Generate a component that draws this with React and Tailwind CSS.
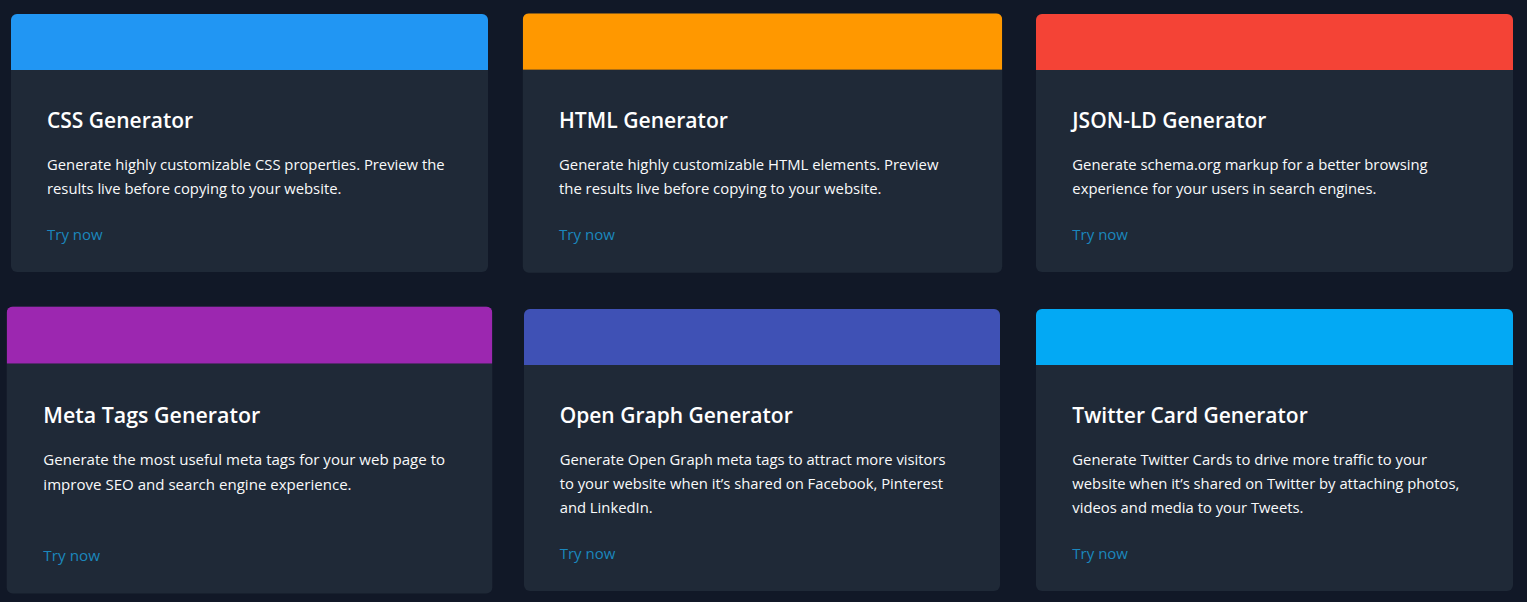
const tools = [
  {
    title: 'CSS Generator',
    text: 'Generate highly customizable CSS properties. Preview the results live before copying to your website.',
    bar: 'bg-[#2196f3]',
    lift: '',
  },
  {
    title: 'HTML Generator',
    text: 'Generate highly customizable HTML elements. Preview the results live before copying to your website.',
    bar: 'bg-[#ff9800]',
    lift: 'scale-[1.005]',
  },
  {
    title: 'JSON-LD Generator',
    text: 'Generate schema.org markup for a better browsing experience for your users in search engines.',
    bar: 'bg-[#f44336]',
    lift: '',
  },
  {
    title: 'Meta Tags Generator',
    text: 'Generate the most useful meta tags for your web page to improve SEO and search engine experience.',
    bar: 'bg-[#9c27b0]',
    lift: 'scale-[1.018]',
  },
  {
    title: 'Open Graph Generator',
    text: 'Generate Open Graph meta tags to attract more visitors to your website when it\u2019s shared on Facebook, Pinterest and LinkedIn.',
    bar: 'bg-[#3f51b5]',
    lift: '',
  },
  {
    title: 'Twitter Card Generator',
    text: 'Generate Twitter Cards to drive more traffic to your website when it\u2019s shared on Twitter by attaching photos, videos and media to your Tweets.',
    bar: 'bg-[#03a9f4]',
    lift: '',
  },
];

const ToolCard = ({ tool }) => (
  <div className={`flex flex-col overflow-hidden rounded-md bg-[#1f2937] transition-transform ${tool.lift}`}>
    {/* coloured header */}
    <div className={`h-14 ${tool.bar}`} />
    <div className="flex flex-1 flex-col px-9 pt-[36px] pb-[26px]">
      <h3 className="text-[21px] leading-7 font-semibold text-white">{tool.title}</h3>
      <p className="mt-[18px] max-w-[400px] text-[14.8px] leading-6 text-gray-50">{tool.text}</p>
      <a href="#" className="mt-auto pt-[22px] text-[15px] leading-6 font-medium text-[#1b87bd]">
        Try now
      </a>
    </div>
  </div>
);

export default function App() {
  return (
    <div
      className="min-h-[602px] bg-[#111827] pt-[14px] pl-[11px] pr-[14px] pb-3"
      style={{ fontFamily: '"Open Sans", "Noto Sans", sans-serif' }}
    >
      <div className="grid grid-cols-3 gap-x-9 gap-y-[37px]">
        {tools.map((tool) => (
          <ToolCard key={tool.title} tool={tool} />
        ))}
      </div>
    </div>
  );
}
